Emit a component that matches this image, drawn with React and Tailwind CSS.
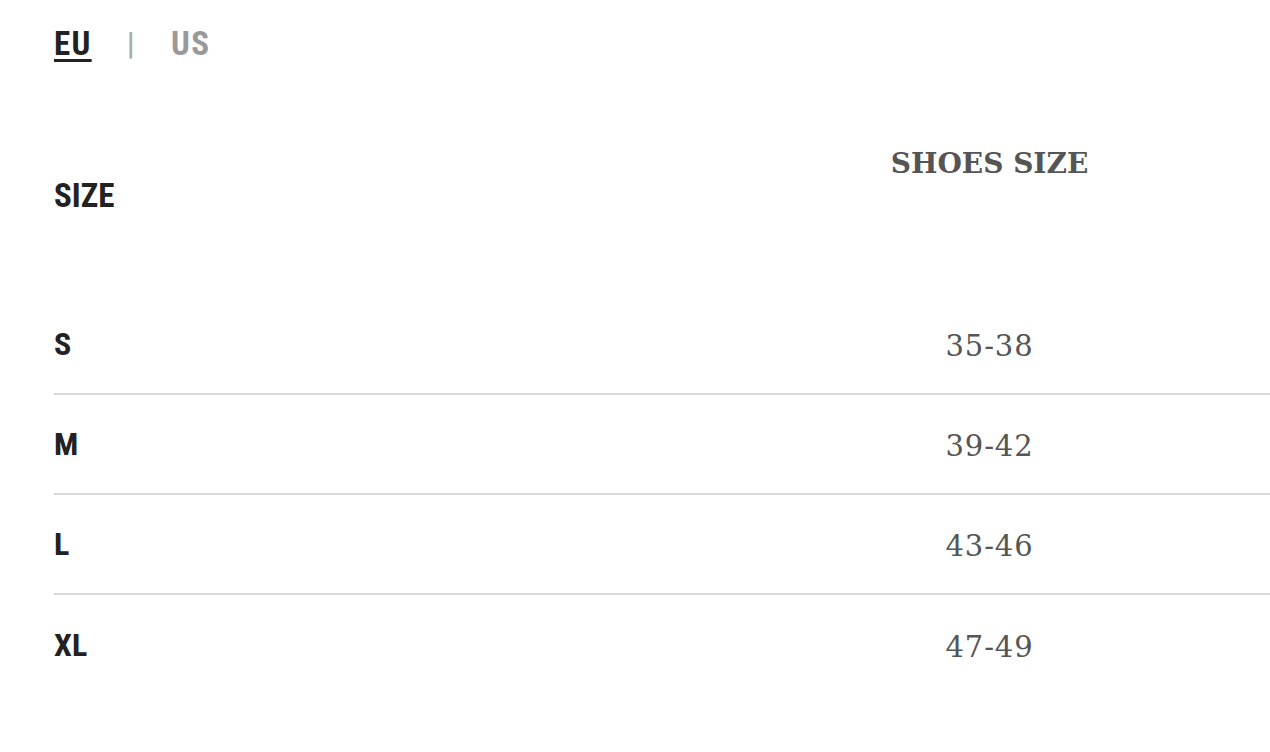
const cond = { fontFamily: '"Roboto Condensed", "DejaVu Sans Condensed", Roboto, sans-serif', fontStretch: 'condensed' };

const rows = [
  ['S', '35-38'],
  ['M', '39-42'],
  ['L', '43-46'],
  ['XL', '47-49'],
];

export default function App() {
  return (
    <div className="min-h-screen bg-white pl-[54px] pt-[26px]">
      <div className="flex items-center h-[36px] text-[33px] font-bold tracking-[0.04em]" style={cond}>
        <span className="text-[#222] underline decoration-[3px] underline-offset-[4px]">EU</span>
        <span className="ml-[35px] -mt-[3px] text-[32px] font-medium text-[#aaa]">|</span>
        <span className="ml-[35px] text-[#999]">US</span>
      </div>

      <div className="grid grid-cols-[655px_1fr] mt-[82px] h-[151px]">
        <div className="pt-[32px] text-[33px] font-bold text-[#222] leading-[40px]" style={cond}>SIZE</div>
        <div className="text-center font-['DejaVu_Serif',serif] text-[28px] font-bold text-[#555] leading-[40px]">SHOES SIZE</div>
      </div>

      {rows.map(([s, n], i) => (
        <div
          key={s}
          className={`grid grid-cols-[655px_1fr] items-center h-[100px] ${i < rows.length - 1 ? 'border-b-2 border-[#dadada]' : ''}`}
        >
          <div className="text-[32px] font-bold text-[#222]" style={cond}>{s}</div>
          <div className="pt-[6px] text-center font-['DejaVu_Serif',serif] text-[29px] tracking-[0.03em] text-[#555]">{n}</div>
        </div>
      ))}
    </div>
  );
}
